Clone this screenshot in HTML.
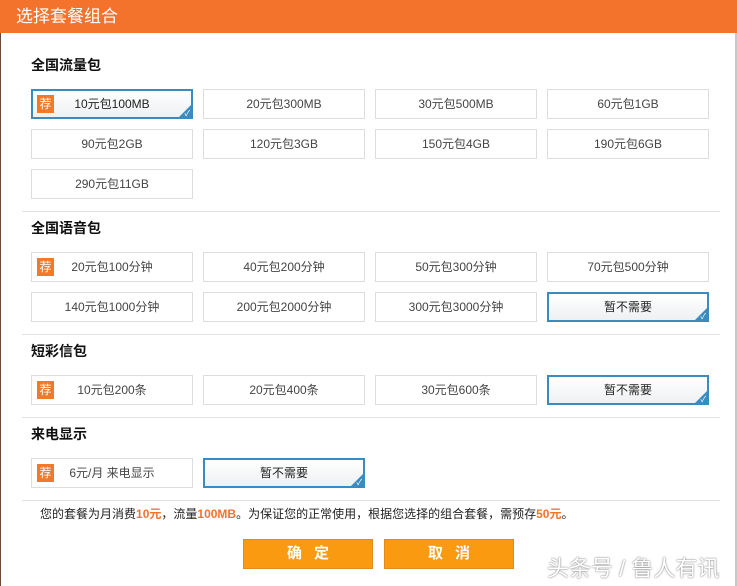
<!DOCTYPE html>
<html><head><meta charset="utf-8"><style>
*{margin:0;padding:0;box-sizing:border-box}
body{width:737px;height:586px;background:#fff;position:relative;overflow:hidden;font-family:"Liberation Sans","Noto Sans CJK SC",sans-serif;color:#333}
.hd{position:absolute;left:0;top:0;width:737px;height:33px;background:#f3722c;color:#fff;font-size:17px;line-height:33px;padding-left:16px}
.rb{position:absolute;right:0;top:33px;width:2px;height:553px;background:#c8c8c8}
.lb{position:absolute;left:0;top:33px;width:1px;height:553px;background:#6b4a33}
.t{position:absolute;left:31px;font-size:14px;font-weight:bold;color:#111}
.b{position:absolute;width:162px;height:30px;border:1px solid #ddd;background:#fff;font-size:12px;text-align:center;line-height:28px;color:#444}
.b.s{border:2px solid #3a8cc0;background:linear-gradient(#fff,#eef0f2);line-height:26px;color:#222;overflow:hidden}
.b.s:after{content:"";position:absolute;right:-1px;bottom:-1px;border-style:solid;border-width:0 0 14px 14px;border-color:transparent transparent #3a8cc0 transparent}
.b.s:before{content:"✓";position:absolute;right:1px;bottom:-10px;color:#fff;font-size:8px;z-index:2}
.r{position:absolute;left:5px;top:5px;width:17px;height:18px;background:#f07a2a;color:#fff;font-size:12px;line-height:18px;text-align:center}
.b.s .r{left:4px;top:4px}
.sep{position:absolute;left:22px;width:698px;height:1px;background:#e2e2e2}
.info{position:absolute;left:40px;top:505px;font-size:12px;color:#222}
.info b{color:#f3722c}
.btn{position:absolute;top:539px;width:130px;height:30px;background:#fa9a10;border:1px solid #e08a20;color:#fff;font-size:15px;font-weight:bold;text-align:center;line-height:28px;letter-spacing:12px;padding-left:12px}
.wm{position:absolute;left:547px;top:551px;font-size:22px;color:#fff;text-shadow:0 0 1px #777,0 0 2px #999}
</style></head><body>
<div class="hd">选择套餐组合</div>
<div class="lb"></div><div class="rb"></div>
<div class="t" style="top:55px">全国流量包</div>
<div class="b s" style="left:31px;top:89px"><span class="r">荐</span>10元包100MB</div>
<div class="b" style="left:203px;top:89px">20元包300MB</div>
<div class="b" style="left:375px;top:89px">30元包500MB</div>
<div class="b" style="left:547px;top:89px">60元包1GB</div>
<div class="b" style="left:31px;top:129px">90元包2GB</div>
<div class="b" style="left:203px;top:129px">120元包3GB</div>
<div class="b" style="left:375px;top:129px">150元包4GB</div>
<div class="b" style="left:547px;top:129px">190元包6GB</div>
<div class="b" style="left:31px;top:169px">290元包11GB</div>
<div class="sep" style="top:211px"></div>
<div class="t" style="top:218px">全国语音包</div>
<div class="b" style="left:31px;top:252px"><span class="r">荐</span>20元包100分钟</div>
<div class="b" style="left:203px;top:252px">40元包200分钟</div>
<div class="b" style="left:375px;top:252px">50元包300分钟</div>
<div class="b" style="left:547px;top:252px">70元包500分钟</div>
<div class="b" style="left:31px;top:292px">140元包1000分钟</div>
<div class="b" style="left:203px;top:292px">200元包2000分钟</div>
<div class="b" style="left:375px;top:292px">300元包3000分钟</div>
<div class="b s" style="left:547px;top:292px">暂不需要</div>
<div class="sep" style="top:334px"></div>
<div class="t" style="top:341px">短彩信包</div>
<div class="b" style="left:31px;top:375px"><span class="r">荐</span>10元包200条</div>
<div class="b" style="left:203px;top:375px">20元包400条</div>
<div class="b" style="left:375px;top:375px">30元包600条</div>
<div class="b s" style="left:547px;top:375px">暂不需要</div>
<div class="sep" style="top:417px"></div>
<div class="t" style="top:424px">来电显示</div>
<div class="b" style="left:31px;top:458px"><span class="r">荐</span>6元/月 来电显示</div>
<div class="b s" style="left:203px;top:458px">暂不需要</div>
<div class="sep" style="top:500px"></div>
<div class="info">您的套餐为月消费<b>10元</b>，流量<b>100MB</b>。为保证您的正常使用，根据您选择的组合套餐，需预存<b>50元</b>。</div>
<div class="btn" style="left:243px">确定</div>
<div class="btn" style="left:384px">取消</div>
<div class="wm">头条号 / 鲁人有讯</div>
</body></html>
